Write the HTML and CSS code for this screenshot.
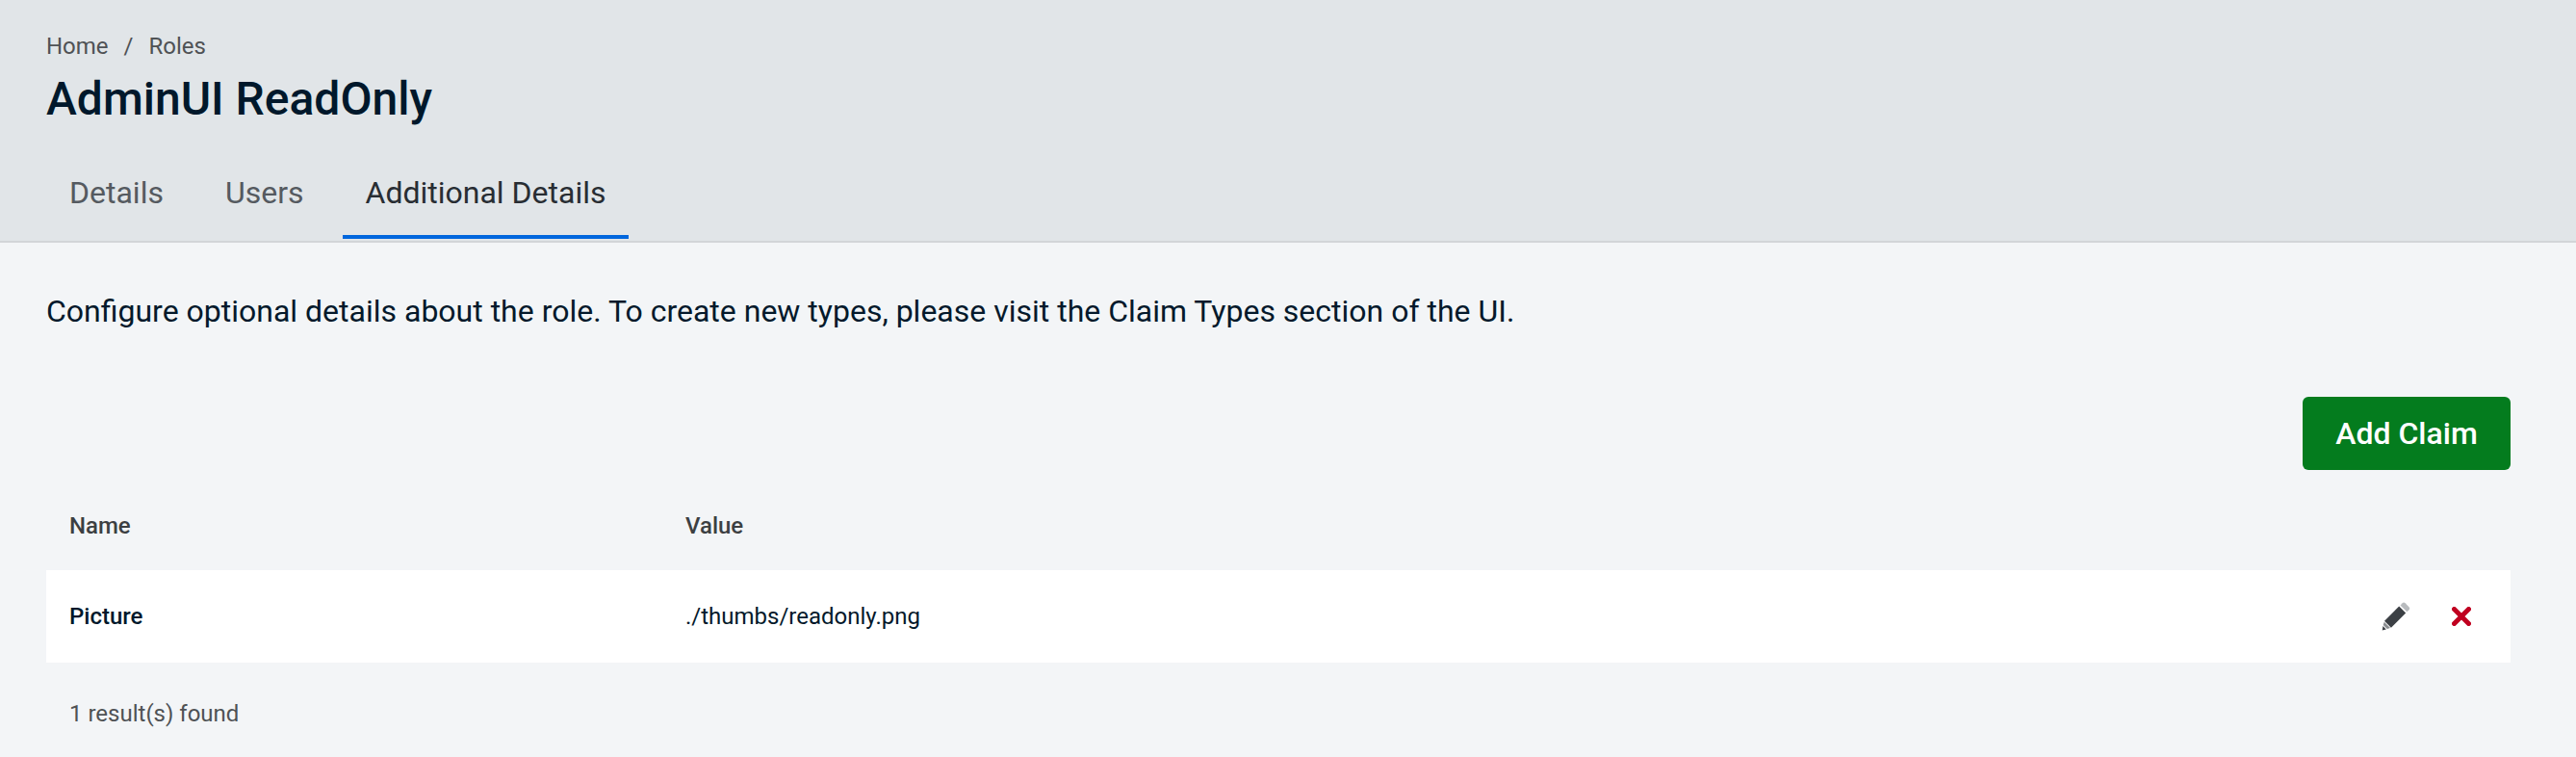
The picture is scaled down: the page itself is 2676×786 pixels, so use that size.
FILE: index.html
```html
<!DOCTYPE html>
<html lang="en">
<head>
    <meta charset="UTF-8">
    <meta name="viewport" content="width=device-width, initial-scale=1.0">
    <title>AdminUI ReadOnly</title>
    <link rel="stylesheet" href="styles.css">
</head>
<body>

<header class="page-header">
    <nav class="breadcrumb">
        <a href="#">Home</a>
        <span class="breadcrumb-sep">/</span>
        <a href="#">Roles</a>
    </nav>
    <h1 class="page-title">AdminUI ReadOnly</h1>
    <div class="tabs">
        <a class="tab" href="#">Details</a>
        <a class="tab" href="#">Users</a>
        <a class="tab tab-active" href="#">Additional Details</a>
    </div>
</header>

<main class="content">
    <p class="intro">Configure optional details about the role. To create new types, please visit the Claim Types section of the UI.</p>

    <div class="toolbar">
        <button type="button" class="btn-add">Add Claim</button>
    </div>

    <table class="claims">
        <thead>
            <tr>
                <th class="col-name">Name</th>
                <th>Value</th>
                <th class="col-actions"></th>
            </tr>
        </thead>
        <tbody>
            <tr>
                <td class="cell-name">Picture</td>
                <td>./thumbs/readonly.png</td>
                <td class="col-actions">
                    <div class="actions">
                        <button type="button" class="icon-btn" aria-label="Edit">
                            <svg width="30" height="30" viewBox="0 0 28 28">
                                <path fill="#b8bbbe" d="M20.2 1.2a2 2 0 0 1 2.800 0l3.600 3.600a2 2 0 0 1 0 2.800l-2 2-6.400-6.400z"/>
                                <path fill="#3c4045" d="M17 4.300l6.500 6.500L9.300 25l-6.500-6.500z"/>
                                <path fill="#8a8d90" d="M2.600 19.400l5.800 5.800-3 1-3.800-3.800z"/>
                                <path fill="#3c4045" d="M1.300 23.300l3.200 3.200-3.800 1z"/>
                            </svg>
                        </button>
                        <button type="button" class="icon-btn" aria-label="Delete">
                            <svg width="20" height="20" viewBox="0 0 20 20">
                                <path fill="none" stroke="#c00020" stroke-width="5" stroke-linecap="round" d="M2.500 2.500l15 15M17.500 2.500l-15 15"/>
                            </svg>
                        </button>
                    </div>
                </td>
            </tr>
        </tbody>
    </table>

    <div class="result-count">1 result(s) found</div>
</main>

</body>
</html>
```

FILE: styles.css
```css
* {
    box-sizing: border-box;
}

body {
    font-family: Roboto, "Liberation Sans", sans-serif;
    margin: 0;
    padding: 0;
    background-color: #f3f5f7;
    color: #04192b;
}

a {
    color: inherit;
    text-decoration: none;
}

.page-header {
    background-color: #e1e5e8;
    border-bottom: 2px solid #d2d5d8;
    height: 252px;
    padding: 32px 68px 0 48px;
}

.breadcrumb {
    display: flex;
    gap: 16px;
    font-size: 24px;
    line-height: 33px;
    color: #4f5255;
}

.page-title {
    margin: 11px 0 0;
    font-size: 48px;
    line-height: 54px;
    font-weight: 500;
    color: #00182b;
}

.tabs {
    display: flex;
    gap: 16px;
    margin-top: 30px;
}

.tab {
    height: 88px;
    padding: 18px 24px 0;
    font-size: 32px;
    line-height: 44px;
    color: #555a60;
}

.tab-active {
    color: #282d33;
    border-bottom: 4px solid #0066dd;
}

.content {
    padding: 0 68px 0 48px;
}

.intro {
    margin: 0;
    padding-top: 50px;
    font-size: 32px;
    line-height: 42px;
}

.toolbar {
    display: flex;
    justify-content: flex-end;
    margin-top: 68px;
}

.btn-add {
    width: 216px;
    height: 76px;
    border: none;
    border-radius: 6px;
    background-color: #047c1e;
    color: #fff;
    font-family: inherit;
    font-size: 32px;
    font-weight: 500;
}

.claims {
    width: 100%;
    margin-top: 14px;
    border-collapse: collapse;
    table-layout: fixed;
}

.claims th {
    height: 90px;
    padding: 0 24px 3px;
    text-align: left;
    font-size: 24px;
    font-weight: 500;
    color: #3c3f42;
}

.claims td {
    height: 96px;
    padding: 0 24px;
    background-color: #fff;
    font-size: 24px;
}

.col-name {
    width: 640px;
}

.col-actions {
    width: 300px;
}

.claims .cell-name {
    font-weight: 500;
    color: #00182b;
}

.actions {
    display: flex;
    justify-content: flex-end;
    align-items: center;
    gap: 43px;
    padding-right: 17px;
}

.icon-btn {
    display: flex;
    padding: 0;
    border: none;
    background: none;
}

.result-count {
    padding: 37px 24px 0;
    font-size: 24px;
    line-height: 33px;
    color: #4f5255;
}
```
